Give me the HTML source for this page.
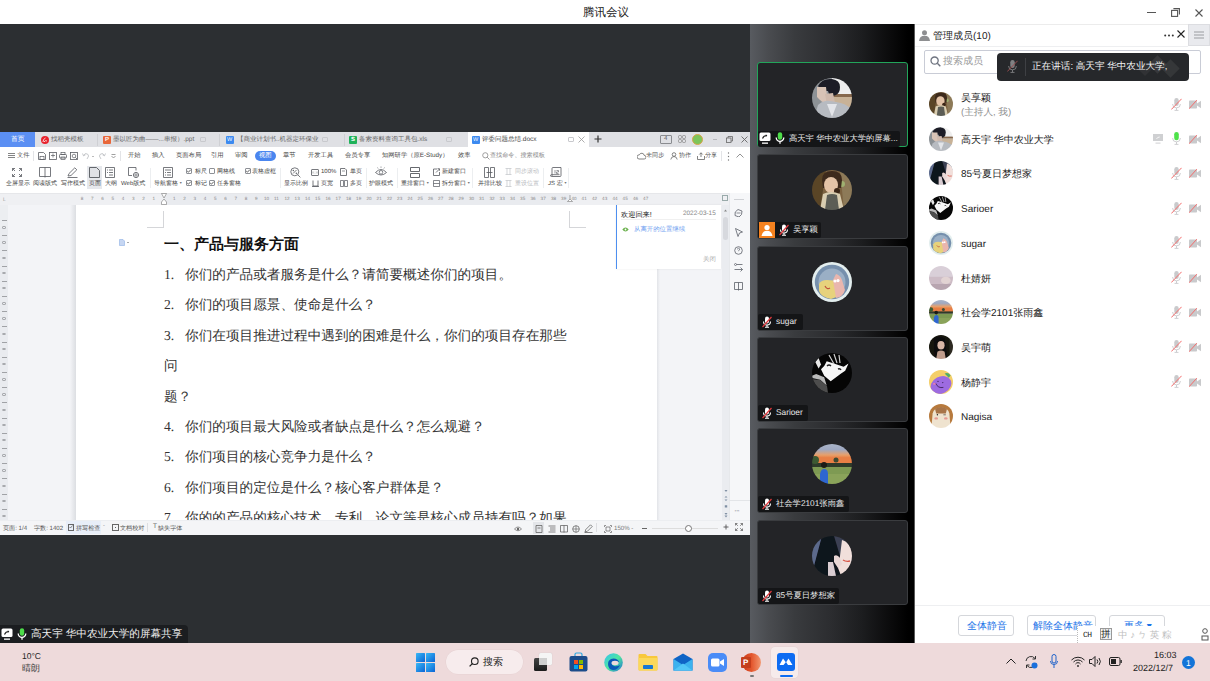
<!DOCTYPE html>
<html><head><meta charset="utf-8">
<style>
*{box-sizing:border-box;margin:0;padding:0}
html,body{width:1210px;height:681px;overflow:hidden;background:#fff;font-family:"Liberation Sans",sans-serif;color:#222;text-rendering:geometricPrecision}
.a{position:absolute}
.t{position:absolute;white-space:nowrap;line-height:1}


</style></head><body>
<svg width="0" height="0" style="position:absolute">
<defs>
<symbol id="micoff" viewBox="0 0 10 12"><rect x="3" y="0.5" width="4" height="7" rx="2" fill="#fff"/><path d="M1.5 5.5a3.5 3.5 0 0 0 7 0" stroke="#fff" stroke-width="1.1" fill="none"/><path d="M5 9v2M3 11.2h4" stroke="#fff" stroke-width="1.1"/><path d="M0.5 11L9.5 1" stroke="#e0393e" stroke-width="1.2"/></symbol>
<symbol id="micon" viewBox="0 0 10 12"><rect x="2.8" y="0.3" width="4.4" height="7.4" rx="2.2" fill="#4ddc4a"/><path d="M1.2 5.5a3.8 3.8 0 0 0 7.6 0" stroke="#fff" stroke-width="1.3" fill="none"/><path d="M5 9.2v2.5" stroke="#fff" stroke-width="1.3"/></symbol>
<symbol id="scr" viewBox="0 0 12 12"><rect x="0.5" y="0.5" width="11" height="8.5" rx="1.5" fill="#fff"/><path d="M3.5 6.5q1-3 4.5-3" stroke="#222" stroke-width="1.1" fill="none"/><path d="M6.8 2.3L8.3 3.5 6.9 4.7" fill="#222"/><rect x="3" y="10.5" width="6" height="1.3" fill="#fff"/></symbol>
<symbol id="host" viewBox="0 0 16 16"><rect width="16" height="16" fill="#f5821f"/><circle cx="8" cy="5.5" r="2.6" fill="#fff"/><path d="M2.5 14q1-5.2 5.5-5.2t5.5 5.2z" fill="#fff"/></symbol>

<symbol id="gmicoff" viewBox="0 0 11 13"><rect x="3.3" y="0" width="4.4" height="8" rx="2.2" fill="#c9cacc"/><path d="M1.6 6a3.9 3.9 0 0 0 7.8 0" stroke="#c9cacc" stroke-width="0.9" fill="none"/><path d="M5.5 9.9v2.3M3.5 12.4h4" stroke="#c9cacc" stroke-width="0.9"/><path d="M0.3 11.5L10.6 0.8" stroke="#f36b6b" stroke-width="1"/></symbol>
<symbol id="gcamoff" viewBox="0 0 12 9"><rect x="0" y="0.5" width="8" height="8" rx="0.8" fill="#c9cacc"/><path d="M8 3.5L12 0.8V8.2L8 5.5z" fill="#c9cacc"/><path d="M0 8.8L7.8 0.2" stroke="#f36b6b" stroke-width="1"/></symbol>
<symbol id="gmicon" viewBox="0 0 11 13"><rect x="3.2" y="0" width="4.6" height="8.2" rx="2.3" fill="#4ee24a"/><path d="M1.6 6a3.9 3.9 0 0 0 7.8 0" stroke="#c9cacc" stroke-width="0.9" fill="none"/><path d="M5.5 9.9v2.3M3.5 12.4h4" stroke="#c9cacc" stroke-width="0.9"/></symbol>
<symbol id="gscr" viewBox="0 0 10 10"><rect x="0" y="0" width="10" height="7" fill="#cfd0d2"/><path d="M3.5 5q0.8-2 3.2-2" stroke="#fff" stroke-width="0.8" fill="none"/><rect x="2.5" y="8.6" width="5" height="1" fill="#cfd0d2"/></symbol>

<clipPath id="cc"><circle cx="20" cy="20" r="20"/></clipPath>
<filter id="bl" x="-10%" y="-10%" width="120%" height="120%"><feGaussianBlur stdDeviation="0.7"/></filter>
<symbol id="A0" viewBox="0 0 40 40"><g clip-path="url(#cc)"><g filter="url(#bl)">
<rect width="40" height="40" fill="#9a9ea3"/>
<rect x="20" y="0" width="20" height="17" fill="#eeeeee"/>
<rect x="20" y="16" width="20" height="3" fill="#86674e"/>
<rect x="22" y="19" width="18" height="10" fill="#c8b297"/>
<path d="M0 10L8 4 10 40H0z" fill="#8d9296"/>
<path d="M6 8q4-8 14-7 8 1 8 8 0 6-4 8l-6 2-2-6-6 0z" fill="#1d1f26"/>
<path d="M5 9l9 0 1 9 2 6-5 1-4-3-3-3z" fill="#d8c3b6"/>
<path d="M13 16l8-1 2 10-8 2z" fill="#cfb9ac"/>
<path d="M2 40L6 27q6-5 12-4l6 1q10 1 16 8v8z" fill="#b7bbc1"/>
<path d="M15 26l5 13 5-13z" fill="#e3e5e9"/>
</g></g></symbol>
<symbol id="A1" viewBox="0 0 40 40"><g clip-path="url(#cc)"><g filter="url(#bl)">
<rect width="40" height="40" fill="#7b6240"/>
<path d="M0 0h14l-6 40H0z" fill="#5a4528"/>
<path d="M28 0h12v40h-8z" fill="#8d7a58"/>
<circle cx="30" cy="14" r="3" fill="#9fb070"/>
<path d="M10 10q0-9 10-9t10 9l-1 8H11z" fill="#3d2a1c"/>
<ellipse cx="19" cy="15" rx="7" ry="8" fill="#e3c3a6"/>
<circle cx="25" cy="21" r="3" fill="#3a2618"/>
<path d="M8 40l3-16q8-4 17 0l4 16z" fill="#d9cdb0"/>
<path d="M13 40l2-15q5-2 10 0l2 15z" fill="#5b5d55"/>
</g></g></symbol>
<symbol id="A2" viewBox="0 0 40 40"><g clip-path="url(#cc)">
<rect width="40" height="40" fill="#e3eeee"/>
<circle cx="20" cy="20" r="17.2" fill="#7690ad"/>
<circle cx="20" cy="20" r="13.5" fill="#9aafc5"/>
<g clip-path="url(#cc)"><path d="M7 22q2-4 8-4l11 1 1 15-8 3q-10-2-12-8z" fill="#e7d27c" transform="translate(0 0)"/>
<path d="M24 12q4 1 6 6l3 10q-2 7-9 8l-3-18z" fill="#e9b6ae"/>
<circle cx="23" cy="19" r="1.6" fill="#fff"/><circle cx="26" cy="18.6" r="1.6" fill="#fff"/>
<path d="M13 24q2 4 5 2" stroke="#c0503a" stroke-width="1.2" fill="none"/></g>
</g></symbol>
<symbol id="A3" viewBox="0 0 40 40"><g clip-path="url(#cc)">
<rect width="40" height="40" fill="#050505"/>
<path d="M0 26L8 27 15 33 16 40H0z" fill="#4d4d4d"/>
<path d="M0 22.7L4.2 21 12.2 24.3 14.7 32.4 8.2 26.7 0 25z" fill="#b9b9b9"/>
<path d="M12.2 13L14.7 8.2 21.9 10.6 31.6 13.8 36.5 10.6 33.2 17.8 28.4 21 18.7 28.3 12.2 22.7 9 16.2z" fill="#f6f6f6"/>
<path d="M3.3 9L6.6 4.9 9 11.4 6.6 15.4z" fill="#e8e8e8"/>
<path d="M17 2l5 9M22 1l3 9M27 2l1 8" stroke="#cfcfcf" stroke-width="1.2"/>
<path d="M15 13q2-2 4 0M26 16q2-1 3 1" stroke="#222" stroke-width="1.4" fill="none"/>
</g></symbol>
<symbol id="A4" viewBox="0 0 40 40"><g clip-path="url(#cc)"><g filter="url(#bl)">
<defs><linearGradient id="sky" x1="0" y1="0" x2="0" y2="1"><stop offset="0" stop-color="#a9b4c8"/><stop offset="0.25" stop-color="#9fa9c2"/><stop offset="0.5" stop-color="#e7a06b"/><stop offset="0.62" stop-color="#e87f45"/></linearGradient></defs>
<rect width="40" height="22" fill="url(#sky)"/>
<rect y="19" width="40" height="4" fill="#2f3b2c"/>
<circle cx="3" cy="16" r="4" fill="#3d5a32"/>
<circle cx="24" cy="16" r="2.5" fill="#3a4a30"/>
<rect y="23" width="40" height="17" fill="#7e9a52"/>
<rect y="30" width="40" height="10" fill="#8aa35a"/>
<circle cx="12" cy="21" r="3" fill="#1c1a18"/>
<path d="M8 40l0-10q1-5 4-5 4 0 4 5l0 10z" fill="#2f66d0"/>
</g></g></symbol>
<symbol id="A5" viewBox="0 0 40 40"><g clip-path="url(#cc)"><g filter="url(#bl)">
<rect width="40" height="40" fill="#10121a"/>
<path d="M0 0h10L2 30H0z" fill="#5b6b8c"/>
<path d="M22 0h18v40h-6z" fill="#3a4152"/>
<path d="M30 4q8 2 10 12v16q-4 8-10 10l-4-10 2-12z" fill="#f1dfdb"/>
<path d="M22 20q3-2 6 2l2 6-4 4-4-6z" fill="#e8d7d5"/>
<path d="M31 24q3 2 7 1" stroke="#d8584a" stroke-width="1.3" fill="none"/>
<path d="M16 26l5 0 3 14h-8z" fill="#d9cdd2"/>
</g></g></symbol>
<symbol id="A6" viewBox="0 0 40 40"><g clip-path="url(#cc)"><g filter="url(#bl)">
<rect width="40" height="40" fill="#cdbcc6"/>
<rect width="40" height="18" fill="#d9cfd8"/>
<ellipse cx="28" cy="24" rx="8" ry="6" fill="#e2d3d3"/>
<rect y="30" width="40" height="10" fill="#b8a5b0"/>
</g></g></symbol>
<symbol id="A7" viewBox="0 0 40 40"><g clip-path="url(#cc)"><g filter="url(#bl)">
<rect width="40" height="40" fill="#15130f"/>
<path d="M8 6q8-6 18 0l4 30H10z" fill="#0c0a09"/>
<ellipse cx="20" cy="17" rx="6" ry="7" fill="#d9b8a6"/>
<path d="M14 28q6-4 12 0l2 12H12z" fill="#c09d8c"/>
<rect x="34" y="0" width="6" height="40" fill="#2e2a22"/>
</g></g></symbol>
<symbol id="A8" viewBox="0 0 40 40"><g clip-path="url(#cc)">
<rect width="40" height="40" fill="#f4cf69"/>
<path d="M26 6q6-3 10 3l-3 4z" fill="#4fae6a"/>
<ellipse cx="20" cy="25" rx="18" ry="14" transform="rotate(-28 20 25)" fill="#9d6be0"/>
<path d="M11 22q4 9 13 7" stroke="#3a1e55" stroke-width="1.4" fill="none"/>
<circle cx="15" cy="19" r="1" fill="#3a1e55"/><circle cx="23" cy="21" r="1" fill="#3a1e55"/>
<ellipse cx="9" cy="23" rx="2.5" ry="1.5" fill="#e67fb0"/>
</g></symbol>
<symbol id="A9" viewBox="0 0 40 40"><g clip-path="url(#cc)"><g filter="url(#bl)">
<rect width="40" height="40" fill="#b77a3c"/>
<path d="M4 40l2-24q2-10 14-10t14 10l2 24z" fill="#efe3cf"/>
<path d="M10 8q10-6 20 0l-2 8H12z" fill="#a87448"/>
<ellipse cx="12" cy="24" rx="3" ry="2" fill="#e79a93"/><ellipse cx="28" cy="24" rx="3" ry="2" fill="#e79a93"/>
<circle cx="14" cy="18" r="1.2" fill="#222"/><path d="M24 18h4" stroke="#222" stroke-width="1"/>
</g></g></symbol>
</defs></svg>

<!-- title bar -->
<div class="a" style="left:0;top:0;width:1210px;height:24px;background:#fff"></div>
<div class="t" style="left:583px;top:8px;font-size:11.5px;color:#1a1a1a">腾讯会议</div>


<div class="a" style="left:1147px;top:12px;width:9px;height:1px;background:#555"></div>
<svg class="a" style="left:1171px;top:8px" width="9" height="9" viewBox="0 0 9 9"><rect x="0.6" y="2.4" width="6" height="6" fill="none" stroke="#555" stroke-width="1.1"/><path d="M2.4 0.6h6v6" fill="none" stroke="#555" stroke-width="1.1"/></svg>
<svg class="a" style="left:1195px;top:9px" width="8" height="8" viewBox="0 0 8 8"><path d="M0.5 0.5L7.5 7.5M7.5 0.5L0.5 7.5" stroke="#555" stroke-width="1.1"/></svg>
<!-- dark area -->
<div class="a" style="left:0;top:24px;width:750px;height:619px;background:#2c2f32"></div>


<!-- SHARE -->
<div class="a" style="left:0;top:132px;width:750px;height:403px;background:#fff;overflow:hidden"></div>
<!-- tab bar -->
<div class="a" style="left:0;top:132px;width:750px;height:15px;background:#dfe0e4"></div>
<div class="a" style="left:0;top:132px;width:35px;height:15px;background:#5b8ff3"></div>
<div class="t" style="left:11px;top:137px;font-size:6.8px;color:#fff">首页</div>
<div class="a" style="left:41px;top:136px;width:8px;height:8px;border-radius:50%;background:#e8222c"></div><svg class="a" style="left:42px;top:137px" width="6" height="6" viewBox="0 0 6 6"><path d="M1 5q0-3 2.5-4M2 5q1-2 3-1" fill="none" stroke="#fff" stroke-width="0.8"/></svg>
<div class="t" style="left:51px;top:137px;font-size:6.5px;color:#666">找稻壳模板</div>
<div class="a" style="left:97px;top:134px;width:1px;height:12px;background:#cfd0d4"></div>
<div class="a" style="left:103px;top:136px;width:8px;height:8px;border-radius:1px;background:#e8673a"></div><div class="t" style="left:105px;top:137px;font-size:6px;color:#fff;font-weight:bold">P</div>
<div class="t" style="left:113px;top:137px;font-size:6.5px;color:#666">墨以匠为曲——...串报）.ppt</div>
<div class="a" style="left:200px;top:137px;width:6px;height:5px;border:0.8px solid #c8c9cd;border-radius:1px"></div>
<div class="a" style="left:219px;top:134px;width:1px;height:12px;background:#cfd0d4"></div>
<div class="a" style="left:226px;top:136px;width:8px;height:8px;border-radius:1px;background:#3c8af0"></div><div class="t" style="left:227px;top:137.5px;font-size:5.5px;color:#fff">W</div>
<div class="t" style="left:237px;top:137px;font-size:6.5px;color:#666">【商业计划书..机器定环保业</div>
<div class="a" style="left:322px;top:137px;width:6px;height:5px;border:0.8px solid #c8c9cd;border-radius:1px"></div>
<div class="a" style="left:344px;top:134px;width:1px;height:12px;background:#cfd0d4"></div>
<div class="a" style="left:349px;top:136px;width:8px;height:8px;border-radius:1px;background:#1fb25a"></div><div class="t" style="left:351px;top:137px;font-size:6px;color:#fff;font-weight:bold">S</div>
<div class="t" style="left:359px;top:137px;font-size:6.5px;color:#666">备索资料查询工具包.xls</div>
<div class="a" style="left:446px;top:137px;width:6px;height:5px;border:0.8px solid #c8c9cd;border-radius:1px"></div>
<div class="a" style="left:468px;top:132px;width:121px;height:15px;background:#fff"></div>
<div class="a" style="left:472px;top:136px;width:8px;height:8px;border-radius:1px;background:#3c8af0"></div><div class="t" style="left:473px;top:137.5px;font-size:5.5px;color:#fff">W</div>
<div class="t" style="left:482px;top:137px;font-size:6.5px;color:#444">评委问题总结.docx</div>
<div class="a" style="left:568px;top:137px;width:6px;height:5px;border:0.8px solid #c8c9cd;border-radius:1px"></div>
<svg class="a" style="left:578px;top:136px" width="7" height="7" viewBox="0 0 7 7"><path d="M0.5 0.5L6.5 6.5M6.5 0.5L0.5 6.5" stroke="#999" stroke-width="0.8"/></svg>
<svg class="a" style="left:594px;top:135px" width="8" height="8" viewBox="0 0 8 8"><path d="M4 0.5V7.5M0.5 4H7.5" stroke="#333" stroke-width="1.2"/></svg>
<div class="a" style="left:660px;top:135px;width:12px;height:9px;border:1px solid #8a8c90;border-radius:1px"></div>
<div class="t" style="left:664px;top:136px;font-size:6px;color:#555">4</div>
<svg class="a" style="left:678px;top:135px" width="8" height="8" viewBox="0 0 8 8"><rect x="0.5" y="0.5" width="3" height="3" rx="1" fill="none" stroke="#888" stroke-width="0.8"/><rect x="4.5" y="0.5" width="3" height="3" rx="1" fill="none" stroke="#888" stroke-width="0.8"/><rect x="0.5" y="4.5" width="3" height="3" rx="1" fill="none" stroke="#888" stroke-width="0.8"/><rect x="4.5" y="4.5" width="3" height="3" rx="1" fill="none" stroke="#888" stroke-width="0.8"/></svg>
<div class="a" style="left:692px;top:134px;width:11px;height:11px;border-radius:50%;background:#7dc55a;border:1px solid #d9a44a"></div>
<div class="a" style="left:713px;top:139px;width:4px;height:1px;background:#b8b9bd"></div>
<svg class="a" style="left:726px;top:136px" width="7" height="7" viewBox="0 0 7 7"><rect x="0.5" y="2" width="4.5" height="4.5" fill="none" stroke="#666" stroke-width="0.8"/><path d="M2 2V0.5H6.5V5H5" fill="none" stroke="#666" stroke-width="0.8"/></svg>
<svg class="a" style="left:741px;top:136px" width="7" height="7" viewBox="0 0 7 7"><path d="M0.5 0.5L6.5 6.5M6.5 0.5L0.5 6.5" stroke="#666" stroke-width="0.9"/></svg>



<!-- menu row -->
<svg class="a" style="left:8px;top:153px" width="7" height="5" viewBox="0 0 7 5"><path d="M0 0.5h7M0 2.5h7M0 4.5h7" stroke="#666" stroke-width="0.8"/></svg>
<div class="t" style="left:17px;top:152.5px;font-size:6.3px;color:#555">文件</div>
<div class="a" style="left:33px;top:151px;width:1px;height:10px;background:#e3e4e7"></div>
<svg class="a" style="left:38px;top:152px" width="8" height="8" viewBox="0 0 8 8"><path d="M0.5 0.5h5l2 2v5h-7z" fill="none" stroke="#5a5d63" stroke-width="0.8"/><rect x="2" y="4.5" width="4" height="3" fill="none" stroke="#5a5d63" stroke-width="0.7"/></svg>
<svg class="a" style="left:49px;top:152px" width="8" height="8" viewBox="0 0 8 8"><rect x="0.5" y="0.5" width="7" height="7" fill="none" stroke="#5a5d63" stroke-width="0.8"/><path d="M2 3.5h4M4 1.5v4" stroke="#5a5d63" stroke-width="0.7"/></svg>
<svg class="a" style="left:59px;top:152px" width="8" height="8" viewBox="0 0 8 8"><rect x="0.5" y="2.5" width="7" height="3.5" rx="0.8" fill="none" stroke="#5a5d63" stroke-width="0.8"/><rect x="2" y="0.5" width="4" height="2" fill="none" stroke="#5a5d63" stroke-width="0.7"/><rect x="2" y="5" width="4" height="2.5" fill="none" stroke="#5a5d63" stroke-width="0.7"/></svg>
<svg class="a" style="left:70px;top:152px" width="8" height="8" viewBox="0 0 8 8"><rect x="0.5" y="0.5" width="7" height="7" fill="none" stroke="#5a5d63" stroke-width="0.8"/><circle cx="4" cy="4" r="1.8" fill="none" stroke="#5a5d63" stroke-width="0.7"/><path d="M5.3 5.3l2 2" stroke="#5a5d63" stroke-width="0.8"/></svg>
<svg class="a" style="left:82px;top:152px" width="8" height="8" viewBox="0 0 8 8"><path d="M1.5 3.5q1.5-3 4-1.5t-0.5 5" fill="none" stroke="#b9bbbf" stroke-width="0.8"/><path d="M0.5 1.5l1 2.3 2-1" fill="none" stroke="#b9bbbf" stroke-width="0.8"/></svg>
<div class="a" style="left:92px;top:156px;width:2px;height:1px;background:#bbb"></div>
<svg class="a" style="left:98px;top:152px" width="8" height="8" viewBox="0 0 8 8"><path d="M6.5 3.5q-1.5-3-4-1.5t0.5 5" fill="none" stroke="#b9bbbf" stroke-width="0.8"/><path d="M7.5 1.5l-1 2.3-2-1" fill="none" stroke="#b9bbbf" stroke-width="0.8"/></svg>
<svg class="a" style="left:111px;top:154px" width="5" height="5" viewBox="0 0 5 5"><path d="M0.5 0.5h4M0.5 2l2 2 2-2" fill="none" stroke="#777" stroke-width="0.7"/></svg>
<div class="a" style="left:120px;top:151px;width:1px;height:10px;background:#e3e4e7"></div>
<div class="t" style="left:128px;top:152.7px;font-size:6.3px;color:#444">开始</div>
<div class="t" style="left:152px;top:152.7px;font-size:6.3px;color:#444">插入</div>
<div class="t" style="left:176px;top:152.7px;font-size:6.3px;color:#444">页面布局</div>
<div class="t" style="left:211px;top:152.7px;font-size:6.3px;color:#444">引用</div>
<div class="t" style="left:235px;top:152.7px;font-size:6.3px;color:#444">审阅</div>
<div class="a" style="left:255px;top:151px;width:21px;height:10px;border-radius:5px;background:#4a86ef"></div>
<div class="t" style="left:259px;top:152.7px;font-size:6.3px;color:#fff">视图</div>
<div class="t" style="left:283px;top:152.7px;font-size:6.3px;color:#444">章节</div>
<div class="t" style="left:308px;top:152.7px;font-size:6.3px;color:#444">开发工具</div>
<div class="t" style="left:345px;top:152.7px;font-size:6.3px;color:#444">会员专享</div>
<div class="t" style="left:382px;top:152.7px;font-size:6.3px;color:#444">知网研学（原E-Study）</div>
<div class="t" style="left:458px;top:152.7px;font-size:6.3px;color:#444">效率</div>
<svg class="a" style="left:482px;top:152px" width="8" height="8" viewBox="0 0 8 8"><circle cx="3.3" cy="3.3" r="2.6" fill="none" stroke="#888" stroke-width="0.8"/><path d="M5.2 5.2l2.3 2.3" stroke="#888" stroke-width="0.8"/></svg>
<div class="t" style="left:490px;top:152.7px;font-size:6.1px;color:#888">查找命令、搜索模板</div>
<svg class="a" style="left:637px;top:152px" width="9" height="8" viewBox="0 0 9 8"><path d="M2 7h5.2a1.8 1.8 0 0 0 0-3.6 2.5 2.5 0 0 0-4.8-0.6A2.1 2.1 0 0 0 2 7z" fill="none" stroke="#666" stroke-width="0.8"/></svg>
<div class="t" style="left:646px;top:152.7px;font-size:6.1px;color:#555">未同步</div>
<svg class="a" style="left:670px;top:152px" width="8" height="8" viewBox="0 0 8 8"><circle cx="4" cy="2.5" r="1.8" fill="none" stroke="#666" stroke-width="0.8"/><path d="M0.8 7.5q0.5-3 3.2-3t3.2 3" fill="none" stroke="#666" stroke-width="0.8"/></svg>
<div class="t" style="left:679px;top:152.7px;font-size:6.1px;color:#555">协作</div>
<svg class="a" style="left:697px;top:152px" width="8" height="8" viewBox="0 0 8 8"><path d="M0.5 4v3.5h7V4M4 5V0.8M2.3 2.5L4 0.8l1.7 1.7" fill="none" stroke="#666" stroke-width="0.8"/></svg>
<div class="t" style="left:705px;top:152.7px;font-size:6.1px;color:#555">分享</div>
<div class="a" style="left:721px;top:151px;width:1px;height:10px;background:#e3e4e7"></div>
<svg class="a" style="left:727px;top:152px" width="3" height="9" viewBox="0 0 3 9"><circle cx="1.5" cy="1" r="0.7" fill="#777"/><circle cx="1.5" cy="4.5" r="0.7" fill="#777"/><circle cx="1.5" cy="8" r="0.7" fill="#777"/></svg>
<svg class="a" style="left:736px;top:153px" width="8" height="5" viewBox="0 0 8 5"><path d="M0.5 4.5L4 1l3.5 3.5" fill="none" stroke="#777" stroke-width="0.8"/></svg>

<!-- ribbon -->
<svg class="a" style="left:12px;top:168px" width="10" height="9" viewBox="0 0 10 9"><path d="M0.5 3V0.5H3M0.5 0.5l2.5 2.5M9.5 3V0.5H7M9.5 0.5L7 3M0.5 6v2.5H3M0.5 8.5L3 6M9.5 6v2.5H7M9.5 8.5L7 6" fill="none" stroke="#55585e" stroke-width="0.8"/></svg>
<div class="t" style="left:6px;top:181px;font-size:6px;color:#444">全屏显示</div>
<svg class="a" style="left:39px;top:167px" width="12" height="11" viewBox="0 0 12 11"><path d="M0.5 0.5h11v9h-11zM6 0.5v10" fill="none" stroke="#55585e" stroke-width="0.8"/></svg>
<div class="t" style="left:33px;top:181px;font-size:6px;color:#444">阅读版式</div>
<svg class="a" style="left:67px;top:167px" width="11" height="11" viewBox="0 0 11 11"><path d="M1 9L2 6.5 7.8 0.8l2 2L4 8.5zM0.5 10.5h10" fill="none" stroke="#55585e" stroke-width="0.8"/></svg>
<div class="t" style="left:61px;top:181px;font-size:6px;color:#444">写作模式</div>
<div class="a" style="left:87px;top:166px;width:15px;height:23px;background:#e6e8ec"></div>
<svg class="a" style="left:89px;top:167px" width="11" height="11" viewBox="0 0 11 11"><path d="M0.5 0.5h7l3 3v7h-10z" fill="#e0e2e6" stroke="#55585e" stroke-width="0.9"/></svg>
<div class="t" style="left:89px;top:181px;font-size:6px;color:#444">页面</div>
<svg class="a" style="left:105px;top:167px" width="10" height="11" viewBox="0 0 10 11"><path d="M0.5 0.5h9v10h-9zM2 3h1M4 3h4M2 5.5h1M4 5.5h4M4 8h4" fill="none" stroke="#55585e" stroke-width="0.8"/></svg>
<div class="t" style="left:105px;top:181px;font-size:6px;color:#444">大纲</div>
<svg class="a" style="left:128px;top:167px" width="11" height="11" viewBox="0 0 11 11"><path d="M8 3.5V0.5H0.5v8H4" fill="none" stroke="#55585e" stroke-width="0.8"/><circle cx="8" cy="8" r="2.6" fill="none" stroke="#55585e" stroke-width="0.8"/><path d="M8 5.4v5.2M5.4 8h5.2" stroke="#55585e" stroke-width="0.6"/></svg>
<div class="t" style="left:121px;top:181px;font-size:6px;color:#444">Web版式</div>
<div class="a" style="left:150px;top:168px;width:1px;height:20px;background:#eceef0"></div>
<svg class="a" style="left:163px;top:167px" width="10" height="11" viewBox="0 0 10 11"><path d="M0.5 0.5h9v10h-9zM2 3h6M2 5.5h1M4 5.5h4M2 8h1M4 8h4" fill="none" stroke="#55585e" stroke-width="0.8"/></svg>
<div class="t" style="left:154px;top:181px;font-size:6px;color:#444">导航窗格<span style="font-size:3.5px;vertical-align:1.5px;color:#777"> ▼</span></div>
<div class="a" style="left:186px;top:168px;width:6px;height:6px;border:0.8px solid #8d9096;border-radius:1px;background:#fff"></div><svg class="a" style="left:186px;top:168px" width="6" height="6" viewBox="0 0 6 6"><path d="M1.2 3l1.2 1.2 2.5-2.6" fill="none" stroke="#333" stroke-width="0.8"/></svg>
<div class="t" style="left:195px;top:169px;font-size:6px;color:#444">标尺</div>
<div class="a" style="left:209px;top:168px;width:6px;height:6px;border:0.8px solid #8d9096;border-radius:1px;background:#fff"></div>
<div class="t" style="left:217px;top:169px;font-size:6px;color:#444">网格线</div>
<div class="a" style="left:245px;top:168px;width:6px;height:6px;border:0.8px solid #8d9096;border-radius:1px;background:#fff"></div><svg class="a" style="left:245px;top:168px" width="6" height="6" viewBox="0 0 6 6"><path d="M1.2 3l1.2 1.2 2.5-2.6" fill="none" stroke="#333" stroke-width="0.8"/></svg>
<div class="t" style="left:252px;top:169px;font-size:6px;color:#444">表格虚框</div>
<div class="a" style="left:186px;top:180px;width:6px;height:6px;border:0.8px solid #8d9096;border-radius:1px;background:#fff"></div><svg class="a" style="left:186px;top:180px" width="6" height="6" viewBox="0 0 6 6"><path d="M1.2 3l1.2 1.2 2.5-2.6" fill="none" stroke="#333" stroke-width="0.8"/></svg>
<div class="t" style="left:195px;top:181px;font-size:6px;color:#444">标记</div>
<div class="a" style="left:209px;top:180px;width:6px;height:6px;border:0.8px solid #8d9096;border-radius:1px;background:#fff"></div><svg class="a" style="left:209px;top:180px" width="6" height="6" viewBox="0 0 6 6"><path d="M1.2 3l1.2 1.2 2.5-2.6" fill="none" stroke="#333" stroke-width="0.8"/></svg>
<div class="t" style="left:217px;top:181px;font-size:6px;color:#444">任务窗格</div>
<div class="a" style="left:280px;top:168px;width:1px;height:20px;background:#eceef0"></div>
<svg class="a" style="left:290px;top:167px" width="11" height="11" viewBox="0 0 11 11"><circle cx="4.8" cy="4.8" r="4" fill="none" stroke="#55585e" stroke-width="0.8"/><path d="M7.8 7.8l2.6 2.6M3 6.5l3.5-3.5" stroke="#55585e" stroke-width="0.8"/><circle cx="3.3" cy="3.5" r="0.7" fill="#55585e"/><circle cx="6.3" cy="6.2" r="0.7" fill="#55585e"/></svg>
<div class="t" style="left:284px;top:181px;font-size:6px;color:#444">显示比例</div>
<svg class="a" style="left:311px;top:169px" width="8" height="7" viewBox="0 0 8 7"><rect x="0.5" y="0.5" width="7" height="6" rx="0.5" fill="none" stroke="#55585e" stroke-width="0.8"/><path d="M2 2.5v2M6 2.5v2M4 2.8v0.4M4 4v0.4" stroke="#55585e" stroke-width="0.5"/></svg>
<div class="t" style="left:321px;top:169px;font-size:6px;color:#444">100%</div>
<svg class="a" style="left:340px;top:168px" width="7" height="8" viewBox="0 0 7 8"><path d="M0.5 0.5h4.5l1.5 1.5v5.5h-6z" fill="none" stroke="#55585e" stroke-width="0.8"/><path d="M2 3h3" stroke="#55585e" stroke-width="0.6"/></svg>
<div class="t" style="left:350px;top:169px;font-size:6px;color:#444">单页</div>
<svg class="a" style="left:312px;top:180px" width="7" height="7" viewBox="0 0 7 7"><path d="M1 0.5v5.5h5V0.5M0 6.5h7" fill="none" stroke="#55585e" stroke-width="0.8"/></svg>
<div class="t" style="left:321px;top:181px;font-size:6px;color:#444">页宽</div>
<svg class="a" style="left:340px;top:180px" width="8" height="7" viewBox="0 0 8 7"><path d="M0.5 0.5h3v6h-3zM4.5 0.5h3v6h-3z" fill="none" stroke="#55585e" stroke-width="0.7"/></svg>
<div class="t" style="left:350px;top:181px;font-size:6px;color:#444">多页</div>
<div class="a" style="left:366px;top:168px;width:1px;height:20px;background:#eceef0"></div>
<svg class="a" style="left:375px;top:166px" width="12" height="11" viewBox="0 0 12 11"><path d="M0.5 6.5q5.5-6 11 0q-5.5 5-11 0z" fill="none" stroke="#55585e" stroke-width="0.8"/><circle cx="6" cy="6.3" r="1.8" fill="none" stroke="#55585e" stroke-width="0.7"/><path d="M6 0.5v1.3M2.5 1.5l0.6 1M9.5 1.5l-0.6 1" stroke="#55585e" stroke-width="0.6"/></svg>
<div class="t" style="left:369px;top:181px;font-size:6px;color:#444">护眼模式</div>
<div class="a" style="left:397px;top:168px;width:1px;height:20px;background:#eceef0"></div>
<svg class="a" style="left:410px;top:167px" width="10" height="11" viewBox="0 0 10 11"><path d="M0.5 0.5h9v4h-9zM0.5 6.5h9v4h-9z" fill="none" stroke="#55585e" stroke-width="0.9"/></svg>
<div class="t" style="left:401px;top:181px;font-size:6px;color:#444">重排窗口<span style="font-size:3.5px;vertical-align:1.5px;color:#777"> ▼</span></div>
<svg class="a" style="left:433px;top:168px" width="7" height="8" viewBox="0 0 7 8"><path d="M4 1H0.5v6.5h6V4M3 4.5L6.5 1M4.5 0.7h2v2" fill="none" stroke="#55585e" stroke-width="0.8"/></svg>
<div class="t" style="left:442px;top:169px;font-size:6px;color:#444">新建窗口</div>
<svg class="a" style="left:433px;top:180px" width="7" height="7" viewBox="0 0 7 7"><path d="M0.5 0.5h6v6h-6zM0.5 3.5h6" fill="none" stroke="#55585e" stroke-width="0.7"/></svg>
<div class="t" style="left:442px;top:181px;font-size:6px;color:#444">拆分窗口<span style="font-size:3.5px;vertical-align:1.5px;color:#777"> ▼</span></div>
<div class="a" style="left:472px;top:168px;width:1px;height:20px;background:#eceef0"></div>
<svg class="a" style="left:484px;top:167px" width="11" height="11" viewBox="0 0 11 11"><path d="M0.5 0.5h4v10h-4zM6.5 0.5h4v10h-4zM2.5 5.5h6" fill="none" stroke="#55585e" stroke-width="0.8"/></svg>
<div class="t" style="left:478px;top:181px;font-size:6px;color:#444">并排比较</div>
<svg class="a" style="left:505px;top:168px" width="7" height="7" viewBox="0 0 7 7"><path d="M0.5 0.5h6M0.5 6.5h6M2 0.5v6M5 0.5v6" fill="none" stroke="#c2c4c8" stroke-width="0.7"/></svg>
<div class="t" style="left:515px;top:169px;font-size:6px;color:#b8babe">同步滚动</div>
<svg class="a" style="left:505px;top:180px" width="7" height="7" viewBox="0 0 7 7"><path d="M0.5 0.5h6M0.5 6.5h6M2 0.5v6M5 0.5v6" fill="none" stroke="#c2c4c8" stroke-width="0.7"/></svg>
<div class="t" style="left:515px;top:181px;font-size:6px;color:#b8babe">重设位置</div>
<div class="a" style="left:543px;top:168px;width:1px;height:20px;background:#eceef0"></div>
<svg class="a" style="left:550px;top:167px" width="12" height="11" viewBox="0 0 12 11"><path d="M2 9V1.5q0-1 1-1h8v8q0 1-1 1H1.5q-1 0-1-1 0-0.8 1-0.8h8" fill="none" stroke="#55585e" stroke-width="0.8"/><path d="M5 3v3.5M6.5 3.5h2v1.5h-2v1.5h2" fill="none" stroke="#55585e" stroke-width="0.6"/></svg>
<div class="t" style="left:548px;top:181px;font-size:6px;color:#444">JS 宏<span style="font-size:3.5px;vertical-align:1.5px;color:#777"> ▼</span></div>
<div class="a" style="left:568px;top:168px;width:1px;height:20px;background:#eceef0"></div>
<!-- ruler -->
<div class="a" style="left:0;top:193px;width:729px;height:12px;background:#eff0f3;border-top:1px solid #e6e7ea"></div>
<div class="a" style="left:164px;top:194px;width:406px;height:11px;background:#e9ebef"></div>
<div class="t" style="left:3px;top:198px;font-size:5px;color:#999">L</div>
<div class="t" style="left:152.4px;top:197px;font-size:4.6px;color:#8a8a8a">1</div>
<div class="t" style="left:142.2px;top:197px;font-size:4.6px;color:#8a8a8a">2</div>
<div class="t" style="left:131.9px;top:197px;font-size:4.6px;color:#8a8a8a">3</div>
<div class="t" style="left:121.7px;top:197px;font-size:4.6px;color:#8a8a8a">4</div>
<div class="t" style="left:111.5px;top:197px;font-size:4.6px;color:#8a8a8a">5</div>
<div class="t" style="left:101.2px;top:197px;font-size:4.6px;color:#8a8a8a">6</div>
<div class="t" style="left:91.0px;top:197px;font-size:4.6px;color:#8a8a8a">7</div>
<div class="t" style="left:80.7px;top:197px;font-size:4.6px;color:#8a8a8a">8</div>
<div class="t" style="left:172.9px;top:197px;font-size:4.6px;color:#8a8a8a">1</div>
<div class="t" style="left:183.2px;top:197px;font-size:4.6px;color:#8a8a8a">2</div>
<div class="t" style="left:193.4px;top:197px;font-size:4.6px;color:#8a8a8a">3</div>
<div class="t" style="left:203.7px;top:197px;font-size:4.6px;color:#8a8a8a">4</div>
<div class="t" style="left:213.9px;top:197px;font-size:4.6px;color:#8a8a8a">5</div>
<div class="t" style="left:224.2px;top:197px;font-size:4.6px;color:#8a8a8a">6</div>
<div class="t" style="left:234.4px;top:197px;font-size:4.6px;color:#8a8a8a">7</div>
<div class="t" style="left:244.7px;top:197px;font-size:4.6px;color:#8a8a8a">8</div>
<div class="t" style="left:254.9px;top:197px;font-size:4.6px;color:#8a8a8a">9</div>
<div class="t" style="left:263.9px;top:197px;font-size:4.6px;color:#8a8a8a">10</div>
<div class="t" style="left:274.1px;top:197px;font-size:4.6px;color:#8a8a8a">11</div>
<div class="t" style="left:284.4px;top:197px;font-size:4.6px;color:#8a8a8a">12</div>
<div class="t" style="left:294.6px;top:197px;font-size:4.6px;color:#8a8a8a">13</div>
<div class="t" style="left:304.9px;top:197px;font-size:4.6px;color:#8a8a8a">14</div>
<div class="t" style="left:315.1px;top:197px;font-size:4.6px;color:#8a8a8a">15</div>
<div class="t" style="left:325.4px;top:197px;font-size:4.6px;color:#8a8a8a">16</div>
<div class="t" style="left:335.6px;top:197px;font-size:4.6px;color:#8a8a8a">17</div>
<div class="t" style="left:345.9px;top:197px;font-size:4.6px;color:#8a8a8a">18</div>
<div class="t" style="left:356.1px;top:197px;font-size:4.6px;color:#8a8a8a">19</div>
<div class="t" style="left:366.4px;top:197px;font-size:4.6px;color:#8a8a8a">20</div>
<div class="t" style="left:376.6px;top:197px;font-size:4.6px;color:#8a8a8a">21</div>
<div class="t" style="left:386.9px;top:197px;font-size:4.6px;color:#8a8a8a">22</div>
<div class="t" style="left:397.1px;top:197px;font-size:4.6px;color:#8a8a8a">23</div>
<div class="t" style="left:407.4px;top:197px;font-size:4.6px;color:#8a8a8a">24</div>
<div class="t" style="left:417.6px;top:197px;font-size:4.6px;color:#8a8a8a">25</div>
<div class="t" style="left:427.9px;top:197px;font-size:4.6px;color:#8a8a8a">26</div>
<div class="t" style="left:438.1px;top:197px;font-size:4.6px;color:#8a8a8a">27</div>
<div class="t" style="left:448.4px;top:197px;font-size:4.6px;color:#8a8a8a">28</div>
<div class="t" style="left:458.6px;top:197px;font-size:4.6px;color:#8a8a8a">29</div>
<div class="t" style="left:468.9px;top:197px;font-size:4.6px;color:#8a8a8a">30</div>
<div class="t" style="left:479.1px;top:197px;font-size:4.6px;color:#8a8a8a">31</div>
<div class="t" style="left:489.4px;top:197px;font-size:4.6px;color:#8a8a8a">32</div>
<div class="t" style="left:499.6px;top:197px;font-size:4.6px;color:#8a8a8a">33</div>
<div class="t" style="left:509.9px;top:197px;font-size:4.6px;color:#8a8a8a">34</div>
<div class="t" style="left:520.1px;top:197px;font-size:4.6px;color:#8a8a8a">35</div>
<div class="t" style="left:530.4px;top:197px;font-size:4.6px;color:#8a8a8a">36</div>
<div class="t" style="left:540.6px;top:197px;font-size:4.6px;color:#8a8a8a">37</div>
<div class="t" style="left:550.9px;top:197px;font-size:4.6px;color:#8a8a8a">38</div>
<div class="t" style="left:561.1px;top:197px;font-size:4.6px;color:#8a8a8a">39</div>
<div class="t" style="left:571.4px;top:197px;font-size:4.6px;color:#8a8a8a">40</div>
<div class="t" style="left:581.6px;top:197px;font-size:4.6px;color:#8a8a8a">41</div>
<div class="t" style="left:591.9px;top:197px;font-size:4.6px;color:#8a8a8a">42</div>
<div class="t" style="left:602.1px;top:197px;font-size:4.6px;color:#8a8a8a">43</div>
<div class="t" style="left:612.4px;top:197px;font-size:4.6px;color:#8a8a8a">44</div>
<div class="t" style="left:622.6px;top:197px;font-size:4.6px;color:#8a8a8a">45</div>
<div class="t" style="left:632.9px;top:197px;font-size:4.6px;color:#8a8a8a">46</div>
<div class="t" style="left:643.1px;top:197px;font-size:4.6px;color:#8a8a8a">47</div>
<svg class="a" style="left:161px;top:193px" width="6" height="12" viewBox="0 0 6 12"><path d="M0.5 0.5h5L3 5zM3 6l2.5 3v2.5h-5V9z" fill="#fff" stroke="#777" stroke-width="0.6"/></svg>
<svg class="a" style="left:567px;top:195px" width="6" height="7" viewBox="0 0 6 7"><path d="M3 0v4M0.5 6.5L3 4l2.5 2.5z" fill="#fff" stroke="#777" stroke-width="0.6"/></svg>
<div class="a" style="left:722px;top:195px;width:6px;height:6px;border:0.8px solid #9aa"></div>
<!-- doc area -->
<div class="a" style="left:0;top:205px;width:729px;height:315px;background:#f3f4f7"></div>
<div class="a" style="left:0;top:205px;width:8px;height:315px;background:#eceef1"></div>
<div class="a" style="left:0;top:228px;width:8px;height:292px;background:#e9ebef"></div>
<div class="a" style="left:2px;top:220.0px;width:5px;height:0.8px;background:#a0a2a6"></div>
<div class="a" style="left:2px;top:226.1px;width:4px;height:2.5px;border:0.6px solid #a8aaae;border-radius:1px"></div>
<div class="a" style="left:2px;top:235.2px;width:5px;height:0.8px;background:#a0a2a6"></div>
<div class="a" style="left:2px;top:241.3px;width:4px;height:2.5px;border:0.6px solid #a8aaae;border-radius:1px"></div>
<div class="a" style="left:2px;top:250.4px;width:5px;height:0.8px;background:#a0a2a6"></div>
<div class="a" style="left:2px;top:256.5px;width:4px;height:2.5px;border:0.6px solid #a8aaae;border-radius:1px"></div>
<div class="a" style="left:2px;top:265.6px;width:5px;height:0.8px;background:#a0a2a6"></div>
<div class="a" style="left:2px;top:271.7px;width:4px;height:2.5px;border:0.6px solid #a8aaae;border-radius:1px"></div>
<div class="a" style="left:2px;top:280.8px;width:5px;height:0.8px;background:#a0a2a6"></div>
<div class="a" style="left:2px;top:286.9px;width:4px;height:2.5px;border:0.6px solid #a8aaae;border-radius:1px"></div>
<div class="a" style="left:2px;top:296.0px;width:5px;height:0.8px;background:#a0a2a6"></div>
<div class="a" style="left:2px;top:302.1px;width:4px;height:2.5px;border:0.6px solid #a8aaae;border-radius:1px"></div>
<div class="a" style="left:2px;top:311.2px;width:5px;height:0.8px;background:#a0a2a6"></div>
<div class="a" style="left:2px;top:317.3px;width:4px;height:2.5px;border:0.6px solid #a8aaae;border-radius:1px"></div>
<div class="a" style="left:2px;top:326.4px;width:5px;height:0.8px;background:#a0a2a6"></div>
<div class="a" style="left:2px;top:332.5px;width:4px;height:2.5px;border:0.6px solid #a8aaae;border-radius:1px"></div>
<div class="a" style="left:2px;top:341.6px;width:5px;height:0.8px;background:#a0a2a6"></div>
<div class="a" style="left:2px;top:347.7px;width:4px;height:2.5px;border:0.6px solid #a8aaae;border-radius:1px"></div>
<div class="a" style="left:2px;top:356.8px;width:5px;height:0.8px;background:#a0a2a6"></div>
<div class="a" style="left:2px;top:362.9px;width:4px;height:2.5px;border:0.6px solid #a8aaae;border-radius:1px"></div>
<div class="a" style="left:2px;top:372.0px;width:5px;height:0.8px;background:#a0a2a6"></div>
<div class="a" style="left:2px;top:378.1px;width:4px;height:2.5px;border:0.6px solid #a8aaae;border-radius:1px"></div>
<div class="a" style="left:2px;top:387.2px;width:5px;height:0.8px;background:#a0a2a6"></div>
<div class="a" style="left:2px;top:393.3px;width:4px;height:2.5px;border:0.6px solid #a8aaae;border-radius:1px"></div>
<div class="a" style="left:2px;top:402.4px;width:5px;height:0.8px;background:#a0a2a6"></div>
<div class="a" style="left:2px;top:408.5px;width:4px;height:2.5px;border:0.6px solid #a8aaae;border-radius:1px"></div>
<div class="a" style="left:2px;top:417.6px;width:5px;height:0.8px;background:#a0a2a6"></div>
<div class="a" style="left:2px;top:423.7px;width:4px;height:2.5px;border:0.6px solid #a8aaae;border-radius:1px"></div>
<div class="a" style="left:2px;top:432.8px;width:5px;height:0.8px;background:#a0a2a6"></div>
<div class="a" style="left:2px;top:438.9px;width:4px;height:2.5px;border:0.6px solid #a8aaae;border-radius:1px"></div>
<div class="a" style="left:2px;top:448.0px;width:5px;height:0.8px;background:#a0a2a6"></div>
<div class="a" style="left:2px;top:454.1px;width:4px;height:2.5px;border:0.6px solid #a8aaae;border-radius:1px"></div>
<div class="a" style="left:2px;top:463.2px;width:5px;height:0.8px;background:#a0a2a6"></div>
<div class="a" style="left:2px;top:469.3px;width:4px;height:2.5px;border:0.6px solid #a8aaae;border-radius:1px"></div>
<div class="a" style="left:2px;top:478.4px;width:5px;height:0.8px;background:#a0a2a6"></div>
<div class="a" style="left:2px;top:484.5px;width:4px;height:2.5px;border:0.6px solid #a8aaae;border-radius:1px"></div>
<div class="a" style="left:2px;top:493.6px;width:5px;height:0.8px;background:#a0a2a6"></div>
<div class="a" style="left:2px;top:499.7px;width:4px;height:2.5px;border:0.6px solid #a8aaae;border-radius:1px"></div>
<div class="a" style="left:2px;top:508.8px;width:5px;height:0.8px;background:#a0a2a6"></div>
<div class="a" style="left:2px;top:514.9px;width:4px;height:2.5px;border:0.6px solid #a8aaae;border-radius:1px"></div>
<div class="a" style="left:2px;top:524.0px;width:5px;height:0.8px;background:#a0a2a6"></div>
<div class="a" style="left:70px;top:205px;width:6px;height:315px;background:linear-gradient(to right,#f3f4f7,#dcdee2)"></div>
<div class="a" style="left:76px;top:205px;width:581px;height:315px;background:#fff"></div>
<div class="a" style="left:657px;top:205px;width:3px;height:315px;background:linear-gradient(to right,#e2e4e8,#f3f4f7)"></div>
<div class="a" style="left:163px;top:211px;width:1px;height:17px;background:#d5d6d9"></div>
<div class="a" style="left:147px;top:227px;width:17px;height:1px;background:#d5d6d9"></div>
<div class="a" style="left:569px;top:211px;width:1px;height:17px;background:#d5d6d9"></div>
<div class="a" style="left:569px;top:227px;width:17px;height:1px;background:#d5d6d9"></div>
<svg class="a" style="left:119px;top:239px" width="6" height="7" viewBox="0 0 6 7"><path d="M0.5 0.5h3.5l1.5 1.5v4.5h-5z" fill="#c6d6f2" stroke="#8fb0e6" stroke-width="0.6"/></svg>
<div class="a" style="left:127px;top:242px;width:1.5px;height:1px;background:#aaa"></div>
<div class="t" style="left:164px;top:237px;font-size:15px;font-weight:bold;color:#111">一、产品与服务方面</div>
<div class="t" style="left:164px;top:267.7px;font-size:13.6px;font-family:'Liberation Serif',serif;color:#333">1.</div>
<div class="t" style="left:185px;top:267.7px;font-size:13.64px;color:#333">你们的产品或者服务是什么？请简要概述你们的项目。</div>
<div class="t" style="left:164px;top:298.1px;font-size:13.6px;font-family:'Liberation Serif',serif;color:#333">2.</div>
<div class="t" style="left:185px;top:298.1px;font-size:13.64px;color:#333">你们的项目愿景、使命是什么？</div>
<div class="t" style="left:164px;top:328.6px;font-size:13.6px;font-family:'Liberation Serif',serif;color:#333">3.</div>
<div class="t" style="left:185px;top:328.6px;font-size:13.64px;color:#333">你们在项目推进过程中遇到的困难是什么，你们的项目存在那些</div>
<div class="t" style="left:164px;top:359.0px;font-size:13.64px;color:#333">问</div>
<div class="t" style="left:164px;top:389.5px;font-size:13.64px;color:#333">题？</div>
<div class="t" style="left:164px;top:419.9px;font-size:13.6px;font-family:'Liberation Serif',serif;color:#333">4.</div>
<div class="t" style="left:185px;top:419.9px;font-size:13.64px;color:#333">你们的项目最大风险或者缺点是什么？怎么规避？</div>
<div class="t" style="left:164px;top:450.4px;font-size:13.6px;font-family:'Liberation Serif',serif;color:#333">5.</div>
<div class="t" style="left:185px;top:450.4px;font-size:13.64px;color:#333">你们项目的核心竞争力是什么？</div>
<div class="t" style="left:164px;top:480.9px;font-size:13.6px;font-family:'Liberation Serif',serif;color:#333">6.</div>
<div class="t" style="left:185px;top:480.9px;font-size:13.64px;color:#333">你们项目的定位是什么？核心客户群体是？</div>
<div class="t" style="left:164px;top:511.3px;font-size:13.6px;font-family:'Liberation Serif',serif;color:#333">7.</div>
<div class="t" style="left:185px;top:511.3px;font-size:13.64px;color:#333">你的的产品的核心技术、专利、论文等是核心成员持有吗？如果</div>
<!-- popup -->
<div class="a" style="left:616px;top:205px;width:105px;height:64px;background:#fff;border-left:1.5px solid #4d8ff0;box-shadow:0 0 2px rgba(0,0,0,0.08)"></div>
<div class="t" style="left:621px;top:210.5px;font-size:7.2px;color:#222">欢迎回来!</div>
<div class="t" style="left:683px;top:211px;font-size:6.4px;color:#888">2022-03-15</div>
<div class="a" style="left:621px;top:219px;width:95px;height:1px;background:#f0f0f0"></div>
<svg class="a" style="left:622px;top:227px" width="7" height="5" viewBox="0 0 7 5"><path d="M0.3 2.5q3.2-4 6.4 0q-3.2 4-6.4 0z" fill="#6ab04c"/><circle cx="3.5" cy="2.5" r="0.9" fill="#fff"/></svg>
<div class="t" style="left:634px;top:227px;font-size:6.4px;color:#6c9df0">从离开的位置继续</div>
<div class="t" style="left:703px;top:257px;font-size:6.4px;color:#aaa">关闭</div>
<div class="a" style="left:722px;top:205px;width:7px;height:315px;background:#eaecf0"></div>
<svg class="a" style="left:724px;top:209px" width="3" height="3" viewBox="0 0 3 3"><path d="M0 2.5L1.5 0.5 3 2.5z" fill="#888"/></svg>
<div class="a" style="left:723px;top:217px;width:5px;height:23px;border-radius:2.5px;background:#d7d9de"></div>
<svg class="a" style="left:724px;top:489px" width="4" height="30" viewBox="0 0 4 30"><path d="M0.5 1h3L2 3zM0.5 8.5h3L2 7zM0.5 10.5h3L2 12zM0.8 16.2h2.4v2.4H0.8zM0.5 24h3L2 26zM0.5 26.5h3L2 28.5z" fill="#7f8fa3"/></svg>
<div class="a" style="left:729px;top:193px;width:21px;height:327px;background:#f6f7f9;border-left:1px solid #e6e8eb"></div>
<div class="a" style="left:734px;top:199px;width:10px;height:1px;background:#d0d2d6"></div>
<svg class="a" style="left:734px;top:209px" width="9" height="8" viewBox="0 0 9 8"><path d="M1 6.5q-1-4 3-6l4 1.5q0.5 4-3 6z" fill="none" stroke="#5c6068" stroke-width="0.8"/><path d="M2.5 4h4" stroke="#5c6068" stroke-width="0.7"/></svg>
<svg class="a" style="left:735px;top:228px" width="8" height="9" viewBox="0 0 8 9"><path d="M0.5 0.5l7 3.5-3 1-1.5 3.5z" fill="none" stroke="#5c6068" stroke-width="0.8"/></svg>
<svg class="a" style="left:734px;top:246px" width="9" height="9" viewBox="0 0 9 9"><circle cx="4.5" cy="4.5" r="3.8" fill="none" stroke="#5c6068" stroke-width="0.8"/><path d="M3 3.2q1.5-1.8 3 0-1.5 1-1.5 2" fill="none" stroke="#5c6068" stroke-width="0.7"/></svg>
<svg class="a" style="left:734px;top:263px" width="9" height="9" viewBox="0 0 9 9"><circle cx="1.5" cy="1.5" r="1" fill="none" stroke="#5c6068" stroke-width="0.7"/><path d="M2.5 1.5h6M0.5 6.5h8M6.5 4.5l2 2-2 2" fill="none" stroke="#5c6068" stroke-width="0.8"/></svg>
<svg class="a" style="left:734px;top:282px" width="9" height="9" viewBox="0 0 9 9"><path d="M0.5 0.5h8v7h-8zM4.5 0.5v8" fill="none" stroke="#5c6068" stroke-width="0.8"/></svg>
<div class="a" style="left:729px;top:500px;width:21px;height:1px;background:#e3e5e8"></div>
<div class="t" style="left:734px;top:507px;font-size:8px;color:#6a6e76;letter-spacing:-1px">···</div>
<div class="a" style="left:0;top:520px;width:750px;height:15px;background:#f4f5f7;border-top:1px solid #eceef1"></div>
<div class="t" style="left:3px;top:525.5px;font-size:6.1px;color:#555">页面: 1/4</div>
<div class="t" style="left:34px;top:525.5px;font-size:6.1px;color:#555">字数: 1402</div>
<div class="a" style="left:66px;top:521px;width:35px;height:13px;background:#e8eef8"></div>
<div class="a" style="left:68px;top:524px;width:6px;height:6.5px;border:0.8px solid #666"></div><svg class="a" style="left:69px;top:525px" width="4" height="4" viewBox="0 0 4 4"><path d="M0.5 2l1 1 2-2.5" fill="none" stroke="#444" stroke-width="0.6"/></svg>
<div class="t" style="left:76px;top:525.5px;font-size:6.1px;color:#555">拼写检查</div>
<div class="t" style="left:103px;top:524px;font-size:5.6px;color:#888">-</div>
<div class="a" style="left:112px;top:524px;width:6.5px;height:6.5px;border:0.8px solid #666"></div><div class="a" style="left:114.5px;top:526.5px;width:1.5px;height:1.5px;background:#666"></div>
<div class="t" style="left:120px;top:525.5px;font-size:6.1px;color:#555">文档校对</div>
<div class="a" style="left:147px;top:523px;width:1px;height:9px;background:#dcdde0"></div>
<div class="t" style="left:153px;top:524px;font-size:6.5px;color:#666">T</div>
<div class="t" style="left:158px;top:525.5px;font-size:6.1px;color:#555">缺失字体</div>
<svg class="a" style="left:514px;top:525px" width="8" height="7" viewBox="0 0 8 7"><path d="M0.5 4q3.5-4 7 0q-3.5 3.5-7 0z" fill="none" stroke="#666" stroke-width="0.7"/><circle cx="4" cy="4" r="1.2" fill="#666"/></svg>
<div class="a" style="left:533px;top:522px;width:11px;height:12px;background:#e3e5e9"></div>
<svg class="a" style="left:535px;top:524.5px" width="8" height="8" viewBox="0 0 8 8"><path d="M1 0.5h6v7H1zM2.5 3h3" fill="none" stroke="#555" stroke-width="0.7"/></svg>
<svg class="a" style="left:548px;top:524.5px" width="8" height="8" viewBox="0 0 8 8"><path d="M0.5 1h7M2 3h5.5M2 5h5.5M0.5 7h7" fill="none" stroke="#555" stroke-width="0.7"/></svg>
<svg class="a" style="left:560px;top:524.5px" width="8" height="8" viewBox="0 0 8 8"><path d="M0.5 0.5h7v6.5h-7zM4 0.5v7" fill="none" stroke="#555" stroke-width="0.7"/></svg>
<svg class="a" style="left:572px;top:524.5px" width="8" height="8" viewBox="0 0 8 8"><circle cx="4" cy="4" r="3.3" fill="none" stroke="#555" stroke-width="0.7"/><path d="M4 0.7v6.6M0.7 4h6.6" stroke="#555" stroke-width="0.6"/></svg>
<svg class="a" style="left:584px;top:523.5px" width="9" height="9" viewBox="0 0 9 9"><path d="M1 8l0.8-2.5L6.5 0.8l1.7 1.7L3.5 7.2zM0.5 8.5h8" fill="none" stroke="#555" stroke-width="0.7"/></svg>
<div class="a" style="left:596px;top:523px;width:1px;height:9px;background:#dcdde0"></div>
<svg class="a" style="left:604px;top:524.5px" width="8" height="8" viewBox="0 0 8 8"><path d="M0.5 2V0.5H2M6 0.5h1.5V2M7.5 6v1.5H6M2 7.5H0.5V6M2 2h4v4H2z" fill="none" stroke="#666" stroke-width="0.7"/></svg>
<div class="t" style="left:614px;top:525.5px;font-size:6.1px;color:#777">150% -</div>
<div class="a" style="left:642px;top:528px;width:5px;height:0.8px;background:#666"></div>
<div class="a" style="left:652px;top:528px;width:66px;height:0.7px;background:#ddd"></div>
<div class="a" style="left:685px;top:524.5px;width:7px;height:7px;border-radius:50%;border:0.8px solid #777;background:#fff"></div>
<svg class="a" style="left:723px;top:524px" width="6" height="6" viewBox="0 0 6 6"><path d="M3 0.5v5M0.5 3h5" stroke="#555" stroke-width="0.9"/></svg>
<svg class="a" style="left:735px;top:523px" width="8" height="8" viewBox="0 0 8 8"><path d="M0.5 2.5V0.5h2M0.5 0.5l2.3 2.3M7.5 2.5V0.5h-2M7.5 0.5L5.2 2.8M0.5 5.5v2h2M0.5 7.5l2.3-2.3M7.5 5.5v2h-2M7.5 7.5L5.2 5.2" fill="none" stroke="#555" stroke-width="0.7"/></svg>
<!-- share label -->
<div class="a" style="left:0;top:625px;width:188px;height:18px;background:#1b1d20;border-top-right-radius:4px"></div>
<svg class="a" style="left:1px;top:628px" width="12" height="12"><use href="#scr"/></svg>
<svg class="a" style="left:17px;top:628px" width="10" height="12"><use href="#micon"/></svg>
<div class="t" style="left:31px;top:629px;font-size:10.6px;color:#f0f0f0">高天宇 华中农业大学的屏幕共享</div>



<!-- video column -->
<div class="a" style="left:750px;top:24px;width:165px;height:619px;background:linear-gradient(to right,#585b60 0px,#4a4c50 18px,#393b3e 45px,#2c2d30 80px,#1c1d1f 112px,#0b0b0c 140px,#000 158px)"></div>
<div class="a" style="left:757px;top:62px;width:151px;height:85px;background:#232427;border:1px solid #22a55a;border-radius:3px"></div>
<svg class="a" style="left:812px;top:78px" width="40" height="40"><use href="#A0"/></svg>
<div class="a" style="left:757px;top:154px;width:151px;height:85px;background:#232427;border:1px solid #3a3c3f;border-radius:3px"></div>
<svg class="a" style="left:812px;top:170px" width="40" height="40"><use href="#A1"/></svg>
<div class="a" style="left:757px;top:246px;width:151px;height:85px;background:#232427;border:1px solid #3a3c3f;border-radius:3px"></div>
<svg class="a" style="left:812px;top:262px" width="40" height="40"><use href="#A2"/></svg>
<div class="a" style="left:757px;top:337px;width:151px;height:85px;background:#232427;border:1px solid #3a3c3f;border-radius:3px"></div>
<svg class="a" style="left:812px;top:353px" width="40" height="40"><use href="#A3"/></svg>
<div class="a" style="left:757px;top:428px;width:151px;height:85px;background:#232427;border:1px solid #3a3c3f;border-radius:3px"></div>
<svg class="a" style="left:812px;top:444px" width="40" height="40"><use href="#A4"/></svg>
<div class="a" style="left:757px;top:520px;width:151px;height:85px;background:#232427;border:1px solid #3a3c3f;border-radius:3px"></div>
<svg class="a" style="left:812px;top:536px" width="40" height="40"><use href="#A5"/></svg>



<!-- tile labels -->
<div class="a" style="left:758px;top:131px;width:142px;height:16px;background:#141517;border-radius:2px"></div>
<svg class="a" style="left:759px;top:132px" width="12" height="12"><use href="#scr"/></svg>
<svg class="a" style="left:775px;top:132px" width="10" height="12"><use href="#micon"/></svg>
<div class="t" style="left:789px;top:134px;font-size:8.3px;color:#e8e8e8">高天宇 华中农业大学的屏幕...</div>

<div class="a" style="left:758px;top:222px;width:63px;height:16px;background:#141517;border-radius:2px"></div>
<svg class="a" style="left:759px;top:222px" width="16" height="16"><use href="#host"/></svg>
<svg class="a" style="left:779px;top:224px" width="10" height="12"><use href="#micoff"/></svg>
<div class="t" style="left:793px;top:225px;font-size:8.3px;color:#e8e8e8">吴享颖</div>

<div class="a" style="left:758px;top:314px;width:45px;height:16px;background:#141517;border-radius:2px"></div>
<svg class="a" style="left:762px;top:316px" width="10" height="12"><use href="#micoff"/></svg>
<div class="t" style="left:776px;top:317px;font-size:8.3px;color:#e8e8e8">sugar</div>

<div class="a" style="left:758px;top:405px;width:50px;height:16px;background:#141517;border-radius:2px"></div>
<svg class="a" style="left:762px;top:407px" width="10" height="12"><use href="#micoff"/></svg>
<div class="t" style="left:776px;top:408px;font-size:8.3px;color:#e8e8e8">Sarioer</div>

<div class="a" style="left:758px;top:496px;width:91px;height:16px;background:#141517;border-radius:2px"></div>
<svg class="a" style="left:762px;top:498px" width="10" height="12"><use href="#micoff"/></svg>
<div class="t" style="left:776px;top:499px;font-size:8.3px;color:#e8e8e8">社会学2101张雨鑫</div>

<div class="a" style="left:758px;top:588px;width:81px;height:16px;background:#141517;border-radius:2px"></div>
<svg class="a" style="left:762px;top:590px" width="10" height="12"><use href="#micoff"/></svg>
<div class="t" style="left:776px;top:591px;font-size:8.3px;color:#e8e8e8">85号夏日梦想家</div>

<!-- member panel -->
<div class="a" style="left:914px;top:24px;width:1px;height:619px;background:#5a5a5a"></div>
<div class="a" style="left:915px;top:24px;width:295px;height:619px;background:#fff;border-top:1px solid #ececec"></div>
<div class="a" style="left:915px;top:46px;width:273px;height:1px;background:#eeeff1"></div>
<svg class="a" style="left:919px;top:30px" width="11" height="11" viewBox="0 0 11 11"><circle cx="5.5" cy="2.8" r="2.5" fill="#8e8f91"/><path d="M0 11q0.5-5.2 5.5-5.2t5.5 5.2z" fill="#8e8f91"/></svg>
<div class="t" style="left:933px;top:32px;font-size:10px;color:#222">管理成员(10)</div>
<svg class="a" style="left:1164px;top:34px" width="10" height="3" viewBox="0 0 10 3"><circle cx="1.2" cy="1.5" r="1" fill="#333"/><circle cx="5" cy="1.5" r="1" fill="#333"/><circle cx="8.8" cy="1.5" r="1" fill="#333"/></svg>
<svg class="a" style="left:1177px;top:30px" width="8" height="8" viewBox="0 0 8 8"><path d="M0.5 0.5L7.5 7.5M7.5 0.5L0.5 7.5" stroke="#222" stroke-width="1.1"/></svg>
<div class="a" style="left:1188px;top:24px;width:22px;height:22px;background:#e9eaee;border:1px solid #dcdde1"></div>
<svg class="a" style="left:1194px;top:31px" width="10" height="8" viewBox="0 0 10 8"><path d="M0 1h10M0 4h10M0 7h10" stroke="#9a9ca0" stroke-width="1"/></svg>
<!-- search -->
<div class="a" style="left:924px;top:50px;width:277px;height:24px;border:1px solid #c9ccd6;border-radius:2px;background:#fff"></div>
<svg class="a" style="left:930px;top:56px" width="11" height="11" viewBox="0 0 11 11"><circle cx="4.6" cy="4.6" r="3.6" stroke="#6f7480" stroke-width="1.3" fill="none"/><path d="M7.3 7.3L10.3 10.3" stroke="#6f7480" stroke-width="1.4"/></svg>
<div class="t" style="left:943px;top:57px;font-size:10px;color:#9a9a9a">搜索成员</div>

<svg class="a" style="left:929px;top:92px" width="24" height="24" viewBox="0 0 40 40"><use href="#A1"/></svg>
<div class="t" style="left:961px;top:94px;font-size:10px;color:#222">吴享颖</div>
<div class="t" style="left:961px;top:107.5px;font-size:9.6px;color:#8f8f8f">(主持人, 我)</div>
<svg class="a" style="left:1171px;top:98px" width="11" height="13"><use href="#gmicoff"/></svg>
<svg class="a" style="left:1189px;top:100px" width="12" height="9"><use href="#gcamoff"/></svg>
<svg class="a" style="left:929px;top:127px" width="24" height="24" viewBox="0 0 40 40"><use href="#A0"/></svg>
<div class="t" style="left:961px;top:135.8px;font-size:10px;color:#222">高天宇 华中农业大学</div>
<svg class="a" style="left:1153px;top:134px" width="10" height="10"><use href="#gscr"/></svg>
<svg class="a" style="left:1171px;top:132px" width="11" height="13"><use href="#gmicon"/></svg>
<svg class="a" style="left:1189px;top:135px" width="12" height="9"><use href="#gcamoff"/></svg>
<svg class="a" style="left:929px;top:161px" width="24" height="24" viewBox="0 0 40 40"><use href="#A5"/></svg>
<div class="t" style="left:961px;top:170.4px;font-size:10px;color:#222">85号夏日梦想家</div>
<svg class="a" style="left:1171px;top:167px" width="11" height="13"><use href="#gmicoff"/></svg>
<svg class="a" style="left:1189px;top:169px" width="12" height="9"><use href="#gcamoff"/></svg>
<svg class="a" style="left:929px;top:196px" width="24" height="24" viewBox="0 0 40 40"><use href="#A3"/></svg>
<div class="t" style="left:961px;top:205.0px;font-size:10px;color:#222">Sarioer</div>
<svg class="a" style="left:1171px;top:202px" width="11" height="13"><use href="#gmicoff"/></svg>
<svg class="a" style="left:1189px;top:204px" width="12" height="9"><use href="#gcamoff"/></svg>
<svg class="a" style="left:929px;top:231px" width="24" height="24" viewBox="0 0 40 40"><use href="#A2"/></svg>
<div class="t" style="left:961px;top:239.8px;font-size:10px;color:#222">sugar</div>
<svg class="a" style="left:1171px;top:236px" width="11" height="13"><use href="#gmicoff"/></svg>
<svg class="a" style="left:1189px;top:239px" width="12" height="9"><use href="#gcamoff"/></svg>
<svg class="a" style="left:929px;top:266px" width="24" height="24" viewBox="0 0 40 40"><use href="#A6"/></svg>
<div class="t" style="left:961px;top:274.5px;font-size:10px;color:#222">杜婧妍</div>
<svg class="a" style="left:1171px;top:271px" width="11" height="13"><use href="#gmicoff"/></svg>
<svg class="a" style="left:1189px;top:274px" width="12" height="9"><use href="#gcamoff"/></svg>
<svg class="a" style="left:929px;top:300px" width="24" height="24" viewBox="0 0 40 40"><use href="#A4"/></svg>
<div class="t" style="left:961px;top:309.2px;font-size:10px;color:#222">社会学2101张雨鑫</div>
<svg class="a" style="left:1171px;top:306px" width="11" height="13"><use href="#gmicoff"/></svg>
<svg class="a" style="left:1189px;top:308px" width="12" height="9"><use href="#gcamoff"/></svg>
<svg class="a" style="left:929px;top:335px" width="24" height="24" viewBox="0 0 40 40"><use href="#A7"/></svg>
<div class="t" style="left:961px;top:344.0px;font-size:10px;color:#222">吴宇萌</div>
<svg class="a" style="left:1171px;top:340px" width="11" height="13"><use href="#gmicoff"/></svg>
<svg class="a" style="left:1189px;top:343px" width="12" height="9"><use href="#gcamoff"/></svg>
<svg class="a" style="left:929px;top:370px" width="24" height="24" viewBox="0 0 40 40"><use href="#A8"/></svg>
<div class="t" style="left:961px;top:378.6px;font-size:10px;color:#222">杨静宇</div>
<svg class="a" style="left:1171px;top:375px" width="11" height="13"><use href="#gmicoff"/></svg>
<svg class="a" style="left:1189px;top:378px" width="12" height="9"><use href="#gcamoff"/></svg>
<svg class="a" style="left:929px;top:404px" width="24" height="24" viewBox="0 0 40 40"><use href="#A9"/></svg>
<div class="t" style="left:961px;top:413.3px;font-size:10px;color:#222">Nagisa</div>

<!-- tooltip -->
<div class="a" style="left:997px;top:52.5px;width:192px;height:28px;background:#26282b;border-radius:4px"></div>
<svg class="a" style="left:1007px;top:60px;opacity:0.55" width="11" height="13"><use href="#gmicoff"/></svg>
<div class="a" style="left:1025px;top:58px;width:1px;height:18px;background:#3e4044"></div>
<div class="t" style="left:1032px;top:62px;font-size:9.6px;color:#f2f2f2">正在讲话: 高天宇 华中农业大学,</div>
<div class="a" style="left:1151px;top:58px;width:13px;height:13px;transform:rotate(45deg);background:rgba(255,255,255,0.08)"></div>
<div class="a" style="left:1164px;top:62px;width:13px;height:13px;transform:rotate(45deg);background:rgba(255,255,255,0.07)"></div>
<div class="a" style="left:1140px;top:64px;width:10px;height:10px;transform:rotate(45deg);background:rgba(255,255,255,0.05)"></div>
<!-- bottom -->
<div class="a" style="left:915px;top:605px;width:295px;height:1px;background:#eeeff1"></div>
<div class="a" style="left:958px;top:615px;width:56px;height:21px;border:1px solid #d5d7db;border-radius:3px"></div>
<div class="t" style="left:967px;top:622px;font-size:10px;color:#1a73e8">全体静音</div>
<div class="a" style="left:1027px;top:615px;width:69px;height:21px;border:1px solid #d5d7db;border-radius:3px"></div>
<div class="t" style="left:1033px;top:622px;font-size:10px;color:#1a73e8">解除全体静音</div>
<div class="a" style="left:1109px;top:615px;width:56px;height:21px;border:1px solid #d5d7db;border-radius:3px"></div>
<div class="t" style="left:1124px;top:622px;font-size:10px;color:#1a73e8">更多 ▾</div>


<!-- taskbar -->
<div class="a" style="left:0;top:643px;width:1210px;height:38px;background:#eedadb"></div>
<div class="t" style="left:22px;top:652px;font-size:8.5px;color:#222">10°C</div>
<div class="t" style="left:22px;top:664px;font-size:9px;color:#444">晴朗</div>
<svg class="a" style="left:416px;top:653px" width="19" height="19" viewBox="0 0 19 19"><defs><linearGradient id="wg" x1="0" y1="0" x2="1" y2="1"><stop offset="0" stop-color="#39b8f5"/><stop offset="1" stop-color="#0a64d6"/></linearGradient></defs><rect x="0" y="0" width="9" height="9" rx="0.6" fill="url(#wg)"/><rect x="10" y="0" width="9" height="9" rx="0.6" fill="url(#wg)"/><rect x="0" y="10" width="9" height="9" rx="0.6" fill="url(#wg)"/><rect x="10" y="10" width="9" height="9" rx="0.6" fill="url(#wg)"/></svg>
<div class="a" style="left:446px;top:650px;width:77px;height:24px;border-radius:12px;background:#f7eced;box-shadow:0 0 0 0.5px #e6d2d3"></div>
<svg class="a" style="left:469px;top:657px" width="10" height="10" viewBox="0 0 10 10"><circle cx="5.8" cy="4.2" r="3.3" fill="none" stroke="#222" stroke-width="1.1"/><path d="M3.4 6.6L0.6 9.4" stroke="#222" stroke-width="1.3"/></svg>
<div class="t" style="left:483px;top:658px;font-size:10px;color:#222">搜索</div>
<div class="a" style="left:539px;top:653px;width:13px;height:12px;background:#f5f5f5;border-radius:1.5px;box-shadow:0 0 1px #bbb"></div>
<div class="a" style="left:534px;top:658px;width:13px;height:13px;background:linear-gradient(#444,#1b1b1b);border-radius:1.5px"></div>
<div class="a" style="left:539px;top:658px;width:8px;height:7px;background:#cfcfcf"></div>
<svg class="a" style="left:569px;top:652px" width="19" height="20" viewBox="0 0 19 20"><path d="M6 4V2.5q0-1.5 1.5-1.5h4q1.5 0 1.5 1.5V4" fill="none" stroke="#2ea7e0" stroke-width="1.2"/><rect x="0.5" y="4" width="18" height="15.5" rx="2" fill="#1c4c8a"/><rect x="5" y="8" width="4" height="4" fill="#f25022"/><rect x="10" y="8" width="4" height="4" fill="#7fba00"/><rect x="5" y="13" width="4" height="4" fill="#00a4ef"/><rect x="10" y="13" width="4" height="4" fill="#ffb900"/></svg>
<svg class="a" style="left:604px;top:653px" width="19" height="19" viewBox="0 0 19 19"><defs><linearGradient id="eg" x1="0" y1="0" x2="1" y2="1"><stop offset="0" stop-color="#35c1f1"/><stop offset="0.5" stop-color="#50e6a0"/><stop offset="1" stop-color="#1e6fd0"/></linearGradient></defs><circle cx="9.5" cy="9.5" r="9.3" fill="url(#eg)"/><path d="M4 11q0-5 5.5-5.5q4.5 0 5.5 3.5H8q-1 2.5 2 4 3 1 6-1-2 5-7 5-5-0.5-5-6z" fill="#0b59b8"/><ellipse cx="11" cy="10" rx="3.5" ry="2.2" fill="#eedadb"/></svg>
<svg class="a" style="left:638px;top:653px" width="20" height="18" viewBox="0 0 20 18"><path d="M0.5 2q0-1 1-1h6l2 2h9q1 0 1 1v12.5q0 1-1 1h-17q-1 0-1-1z" fill="#f8c83c"/><path d="M0.5 5h19v11.5q0 1-1 1h-17q-1 0-1-1z" fill="#fbd85a"/><rect x="5" y="12" width="10" height="4" rx="0.8" fill="#1877d2"/></svg>
<svg class="a" style="left:673px;top:653px" width="20" height="18" viewBox="0 0 20 18"><path d="M0.5 6L10 0.5 19.5 6V17.5H0.5z" fill="#0f64c6"/><path d="M0.5 6L10 12 19.5 6V17.5H0.5z" fill="#3cb2ee"/><path d="M0.5 17.5L10 10.5 19.5 17.5z" fill="#52c6f7"/></svg>
<div class="a" style="left:708px;top:653px;width:19px;height:19px;border-radius:5px;background:#4a8cf7"></div>
<svg class="a" style="left:711px;top:658px" width="13" height="9" viewBox="0 0 13 9"><rect x="0" y="0.5" width="8.5" height="8" rx="1.5" fill="#fff"/><path d="M9 3.5L13 1v7L9 5.5z" fill="#fff"/></svg>
<div class="a" style="left:742px;top:653px;width:19px;height:19px;border-radius:50%;background:linear-gradient(90deg,#c9391a 0,#e3562d 50%,#f29870 100%)"></div>
<div class="a" style="left:741px;top:657px;width:10px;height:11px;background:#c43e1c;border-radius:1px"></div>
<div class="t" style="left:743px;top:659px;font-size:8px;font-weight:bold;color:#fff">P</div>
<div class="a" style="left:750px;top:675px;width:4px;height:1.5px;background:#777;border-radius:1px"></div>
<div class="a" style="left:771px;top:647px;width:27px;height:31px;background:#f6ebeb;border-radius:4px;box-shadow:0 0 0 0.5px #e3d2d3"></div>
<div class="a" style="left:777px;top:653px;width:18px;height:18px;border-radius:3px;background:#0d6cf2"></div>
<svg class="a" style="left:779px;top:657px" width="14" height="9" viewBox="0 0 14 9"><path d="M0.5 8L4 1.5 7 5.5 9.5 1.5 13.5 8z" fill="#fff"/><path d="M4.5 8L7 5 9 8z" fill="#0d6cf2"/></svg>
<div class="a" style="left:780px;top:675px;width:13px;height:2px;background:#0d6cf2;border-radius:1px"></div>
<!-- tray -->
<svg class="a" style="left:1006px;top:658px" width="10" height="6" viewBox="0 0 10 6"><path d="M0.5 5.5L5 1l4.5 4.5" fill="none" stroke="#222" stroke-width="1"/></svg>
<svg class="a" style="left:1024px;top:655px" width="14" height="14" viewBox="0 0 14 14"><path d="M2 6a5 5 0 0 1 9-2.5M12 8a5 5 0 0 1-9 2.5" fill="none" stroke="#333" stroke-width="1"/><path d="M11.5 1v3h-3M2.5 13v-3h3" fill="none" stroke="#333" stroke-width="1"/><circle cx="10.5" cy="10.5" r="3" fill="#1a6fdc"/></svg>
<svg class="a" style="left:1050px;top:654px" width="8" height="15" viewBox="0 0 8 15"><rect x="2" y="0.5" width="4" height="8.5" rx="2" fill="none" stroke="#1f62c9" stroke-width="1"/><path d="M0.5 7a3.5 3.5 0 0 0 7 0M4 10.5v3.5" fill="none" stroke="#1f62c9" stroke-width="1"/></svg>
<svg class="a" style="left:1071px;top:656px" width="14" height="11" viewBox="0 0 14 11"><path d="M0.5 4a9 9 0 0 1 13 0M2.5 6a6 6 0 0 1 9 0M4.5 8a3 3 0 0 1 5 0" fill="none" stroke="#222" stroke-width="1"/><circle cx="7" cy="10" r="0.9" fill="#222"/></svg>
<svg class="a" style="left:1089px;top:656px" width="13" height="11" viewBox="0 0 13 11"><path d="M0.5 3.5h2.5l3-3v10l-3-3H0.5z" fill="none" stroke="#222" stroke-width="1"/><path d="M8 3.5q1.5 2 0 4M10 2q2.8 3.5 0 7" fill="none" stroke="#222" stroke-width="1"/></svg>
<svg class="a" style="left:1109px;top:657px" width="13" height="9" viewBox="0 0 13 9"><rect x="0.5" y="0.5" width="10.5" height="8" rx="1.5" fill="none" stroke="#222" stroke-width="1"/><rect x="2" y="2" width="5" height="5" fill="#222"/><rect x="11.5" y="3" width="1.3" height="3" fill="#222"/></svg>
<div class="t" style="left:1154px;top:650.5px;font-size:9px;color:#222">16:03</div>
<div class="t" style="left:1133px;top:663.5px;font-size:9px;color:#222">2022/12/7</div>
<div class="a" style="left:1182px;top:656px;width:13px;height:13px;border-radius:50%;background:#1374d8"></div>
<div class="t" style="left:1186px;top:658.5px;font-size:8.5px;color:#fff">1</div>
<!-- IME bar -->
<div class="a" style="left:1077px;top:626px;width:133px;height:17px;background:#fff;border-left:1px dotted #bbb"></div>
<div class="t" style="left:1083px;top:631.5px;font-size:8px;font-family:'Liberation Mono',monospace;color:#222;letter-spacing:-0.5px">CH</div>
<div class="a" style="left:1100px;top:628px;width:12px;height:12px;border:1px solid #999;background:#f2f2f2"></div>
<div class="t" style="left:1101px;top:630px;font-size:9.5px;color:#222">拼</div>
<div class="t" style="left:1118px;top:630.5px;font-size:9.5px;color:#bdbdbd">中 ♪ ㄅ 英 粽</div>
<svg class="a" style="left:1201px;top:628px" width="8" height="13" viewBox="0 0 8 13"><circle cx="4" cy="3" r="2.3" fill="none" stroke="#555" stroke-width="1"/><rect x="1" y="8" width="6" height="4" fill="none" stroke="#555" stroke-width="1"/></svg>

</body></html>
